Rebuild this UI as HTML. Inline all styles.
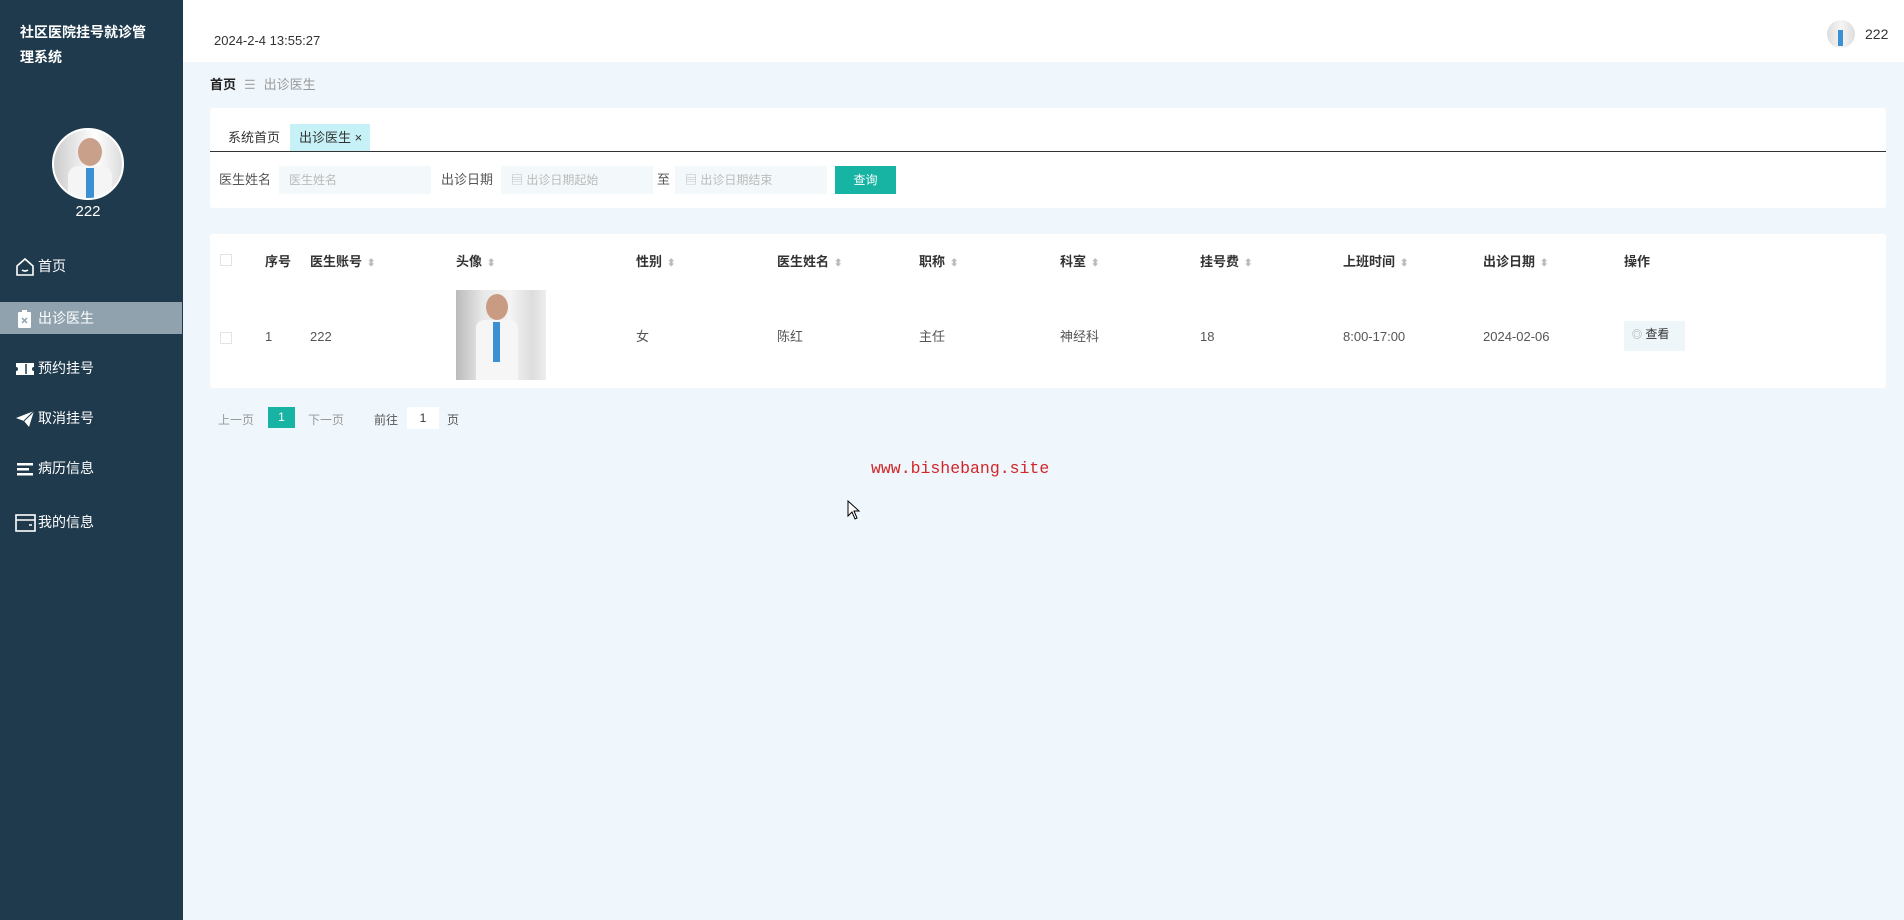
<!DOCTYPE html>
<html><head><meta charset="utf-8"><style>
*{margin:0;padding:0;box-sizing:border-box}
body{width:1904px;height:920px;overflow:hidden;background:#f0f7fc;font-family:"Liberation Sans","Noto Sans CJK SC",sans-serif;font-size:13px;color:#333;position:relative}
.abs{position:absolute;line-height:18px}
.side{left:0;top:0;width:183px;height:920px;background:#1f3a4d}
.title{left:20px;top:20px;width:138px;color:#fff;font-size:14px;line-height:25px !important;font-weight:bold}
.av{left:52px;top:128px;width:72px;height:72px;border-radius:50%;border:2px solid #fff;background:linear-gradient(90deg,#ccc,#eee 40%,#fff 60%,#ddd);overflow:hidden}
.menu{left:0;width:183px;height:32px;color:#fff;font-size:14px;line-height:32px !important;padding-left:38px}
.menu svg{position:absolute;left:15px;top:7px}
.hdr{left:183px;top:0;width:1721px;height:62px;background:#fff}
.card{background:#fff;border-radius:3px}
.inp{height:28px;background:#f3f8fb;color:#bbb;font-size:12px;line-height:28px !important;padding-left:10px}
.th{top:253px;font-size:13px;font-weight:bold;color:#333}
.td{top:328px;font-size:13px;color:#555}
.sort{color:#bbb;font-size:10px;margin-left:5px}
</style></head><body>
<div class="abs side"></div>
<div class="abs title">社区医院挂号就诊管理系统</div>
<div class="abs av"><div style="position:absolute;left:24px;top:8px;width:24px;height:28px;border-radius:50%;background:#c9a08a"></div><div style="position:absolute;left:14px;top:36px;width:44px;height:40px;background:#f5f5f5;border-radius:10px"></div><div style="position:absolute;left:32px;top:38px;width:8px;height:34px;background:#3c8fd0"></div></div>
<div class="abs" style="left:0;top:203px;width:176px;text-align:center;color:#fff;font-size:15px">222</div>
<div class="abs menu" style="top:250px"><svg width="20" height="20" viewBox="0 0 20 20" fill="none" stroke="#fff" stroke-width="1.6"><path d="M2 9L10 2L18 9V18H2Z"/><path d="M7 13q3 2 6 0"/></svg>首页</div>
<div class="abs menu" style="top:302px;background:#8fa2ad;width:182px"><svg width="20" height="20" viewBox="0 0 20 20"><rect x="3" y="3" width="13" height="16" fill="#fff" rx="1"/><rect x="7" y="1" width="5" height="4" fill="#fff"/><path d="M7 9l5 5M12 9l-5 5" stroke="#8fa2ad" stroke-width="1.5"/></svg>出诊医生</div>
<div class="abs menu" style="top:352px"><svg width="20" height="20" viewBox="0 0 20 20"><path d="M1 4h18v4a2 2 0 0 0 0 4v4H1v-4a2 2 0 0 0 0-4z" fill="#fff"/><path d="M11 5v10" stroke="#1f3a4d" stroke-width="1.5"/></svg>预约挂号</div>
<div class="abs menu" style="top:402px"><svg width="20" height="20" viewBox="0 0 20 20"><path d="M1 9L19 2L14 18L9 12Z" fill="#fff"/><path d="M9 12L19 2" stroke="#1f3a4d"/></svg>取消挂号</div>
<div class="abs menu" style="top:452px"><svg width="20" height="20" viewBox="0 0 20 20" fill="#fff"><rect x="2" y="4" width="16" height="2.5"/><rect x="2" y="9" width="12" height="2.5"/><rect x="2" y="14" width="16" height="2.5"/></svg>病历信息</div>
<div class="abs menu" style="top:506px"><svg width="22" height="20" viewBox="0 0 22 20" fill="none" stroke="#fff" stroke-width="1.6"><rect x="1" y="2" width="19" height="16"/><path d="M1 7h19M14 12h3"/></svg>我的信息</div>

<div class="abs hdr"></div>
<div class="abs" style="left:214px;top:32px;font-size:13px;color:#333">2024-2-4 13:55:27</div>
<div class="abs" style="left:1827px;top:20px;width:28px;height:28px;border-radius:50%;background:linear-gradient(90deg,#ddd,#f5f5f5,#ddd)"><div style="position:absolute;left:11px;top:10px;width:5px;height:16px;background:#3c8fd0"></div></div>
<div class="abs" style="left:1865px;top:25px;font-size:14px">222</div>

<div class="abs" style="left:210px;top:76px;font-size:13px"><b style="color:#222">首页</b><span style="color:#aaa;margin:0 8px">☰</span><span style="color:#999">出诊医生</span></div>

<div class="abs card" style="left:210px;top:108px;width:1676px;height:100px"></div>
<div class="abs" style="left:210px;top:151px;width:1676px;height:1px;background:#333"></div>
<div class="abs" style="left:228px;top:129px;font-size:13px;color:#333">系统首页</div>
<div class="abs" style="left:290px;top:124px;width:80px;height:27px;background:#c6f1f6;color:#333;font-size:13px;line-height:27px !important;padding-left:9px">出诊医生 ×</div>
<div class="abs" style="left:219px;top:171px;color:#555">医生姓名</div>
<div class="abs inp" style="left:279px;top:166px;width:152px">医生姓名</div>
<div class="abs" style="left:441px;top:171px;color:#555">出诊日期</div>
<div class="abs inp" style="left:501px;top:166px;width:152px">▤ 出诊日期起始</div>
<div class="abs" style="left:657px;top:171px;color:#555">至</div>
<div class="abs inp" style="left:675px;top:166px;width:152px">▤ 出诊日期结束</div>
<div class="abs" style="left:835px;top:166px;width:61px;height:28px;background:#17b3a3;color:#fff;font-size:12px;line-height:28px !important;text-align:center">查询</div>

<div class="abs card" style="left:210px;top:234px;width:1676px;height:154px"></div>
<div class="abs" style="left:220px;top:254px;width:12px;height:12px;border:1px solid #e3e3e3"></div>
<div class="abs" style="left:220px;top:332px;width:12px;height:12px;border:1px solid #e3e3e3"></div>
<div class="abs th" style="left:265px">序号</div>
<div class="abs th" style="left:310px">医生账号<span class="sort">⬍</span></div>
<div class="abs th" style="left:456px">头像<span class="sort">⬍</span></div>
<div class="abs th" style="left:636px">性别<span class="sort">⬍</span></div>
<div class="abs th" style="left:777px">医生姓名<span class="sort">⬍</span></div>
<div class="abs th" style="left:919px">职称<span class="sort">⬍</span></div>
<div class="abs th" style="left:1060px">科室<span class="sort">⬍</span></div>
<div class="abs th" style="left:1200px">挂号费<span class="sort">⬍</span></div>
<div class="abs th" style="left:1343px">上班时间<span class="sort">⬍</span></div>
<div class="abs th" style="left:1483px">出诊日期<span class="sort">⬍</span></div>
<div class="abs th" style="left:1624px">操作</div>
<div class="abs" style="left:456px;top:290px;width:90px;height:90px;background:linear-gradient(90deg,#bbb,#e8e8e8 30%,#f4f4f4 60%,#ddd 85%,#eee)"><div style="position:absolute;left:30px;top:4px;width:22px;height:26px;border-radius:50%;background:#c99b83"></div><div style="position:absolute;left:20px;top:30px;width:42px;height:60px;background:#f6f6f6;border-radius:8px 8px 0 0"></div><div style="position:absolute;left:37px;top:32px;width:7px;height:40px;background:#3c8fd0"></div></div>
<div class="abs td" style="left:265px">1</div>
<div class="abs td" style="left:310px">222</div>
<div class="abs td" style="left:636px">女</div>
<div class="abs td" style="left:777px">陈红</div>
<div class="abs td" style="left:919px">主任</div>
<div class="abs td" style="left:1060px">神经科</div>
<div class="abs td" style="left:1200px">18</div>
<div class="abs td" style="left:1343px">8:00-17:00</div>
<div class="abs td" style="left:1483px">2024-02-06</div>
<div class="abs" style="left:1624px;top:321px;width:61px;height:30px;background:#eef6fa;font-size:12px;line-height:26px !important;padding-left:8px;color:#333"><span style="color:#999;font-size:10px">◎</span> 查看</div>

<div class="abs" style="left:218px;top:411px;color:#999;font-size:12px">上一页</div>
<div class="abs" style="left:268px;top:407px;width:27px;height:21px;background:#17b3a3;color:#fff;text-align:center;line-height:21px !important;font-size:12px">1</div>
<div class="abs" style="left:308px;top:411px;color:#999;font-size:12px">下一页</div>
<div class="abs" style="left:374px;top:411px;color:#555;font-size:12px">前往</div>
<div class="abs" style="left:407px;top:407px;width:32px;height:22px;background:#fff;text-align:center;line-height:22px !important;font-size:12px">1</div>
<div class="abs" style="left:447px;top:411px;color:#555;font-size:12px">页</div>

<div class="abs" style="left:871px;top:460px;color:#d0262a;font-family:'Liberation Mono',monospace;font-size:16.5px">www.bishebang.site</div>
<svg class="abs" style="left:847px;top:500px" width="14" height="20" viewBox="0 0 14 20"><path d="M1 1V16L5 12L8 19L10 18L7 11H12Z" fill="#fff" stroke="#000"/></svg>
</body></html>
